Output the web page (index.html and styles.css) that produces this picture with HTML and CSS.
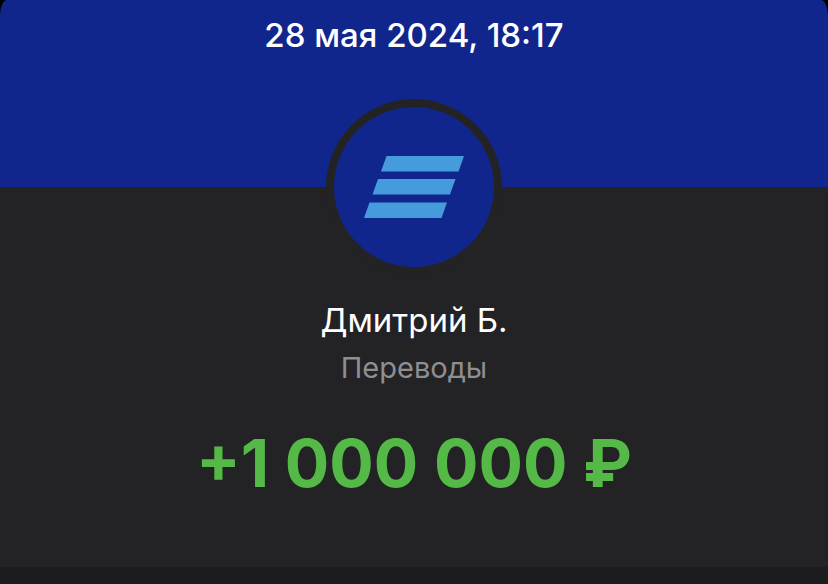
FILE: index.html
```
<!DOCTYPE html>
<html lang="ru">
<head>
<meta charset="UTF-8">
<meta name="viewport" content="width=device-width, initial-scale=1.0">
<title>Перевод</title>
<link rel="stylesheet" href="styles.css">
</head>
<body>

<main class="receipt">
    <header class="receipt-header">
        <time class="date" datetime="2024-05-28T18:17">28 мая 2024, 18:17</time>
    </header>
    <section class="details">
        <div class="logo">
            <svg viewBox="0 0 100 62" class="logo-icon" aria-hidden="true">
                <path d="M22.500 0H100L94.500 15.500H17Z"/>
                <path d="M14 23H91.500L86 38.500H8.500Z"/>
                <path d="M5.500 46.500H83L77.500 62H0Z"/>
            </svg>
        </div>
        <h1 class="name">Дмитрий Б.</h1>
        <p class="category">Переводы</p>
        <p class="amount">+1 000 000 ₽</p>
    </section>
</main>

</body>
</html>
```
FILE: styles.css
```
* {
    box-sizing: border-box;
}
body {
    margin: 0;
    min-height: 100vh;
    background-color: #1c1c1e;
    font-family: Inter, "Liberation Sans", sans-serif;
    color: #fff;
    text-align: center;
}
.receipt {
    background-color: #000;
}
.receipt-header {
    height: 187px;
    padding-top: 13px;
    background-color: #11268c;
    border-radius: 7px 7px 0 0 / 16px 16px 0 0;
}
.date {
    font-size: 33px;
    line-height: 44px;
    font-weight: 500;
}
.details {
    display: flex;
    flex-direction: column;
    align-items: center;
    padding-bottom: 62px;
    background-color: #232325;
}
.logo {
    display: flex;
    align-items: center;
    justify-content: center;
    width: 176px;
    height: 176px;
    margin-top: -88px;
    border: 8px solid #232325;
    border-radius: 50%;
    background-color: #11268c;
}
.logo-icon {
    width: 100px;
    height: 62px;
    fill: #469bdc;
}
.name {
    margin: 23px 0 0;
    font-size: 33px;
    line-height: 44px;
    font-weight: 400;
}
.category {
    margin: 8px 0 0;
    font-size: 29px;
    line-height: 36px;
    color: #8e8e93;
}
.amount {
    margin: 35px 0 0;
    font-size: 66px;
    line-height: 84px;
    font-weight: 700;
    color: #55b947;
}
```
